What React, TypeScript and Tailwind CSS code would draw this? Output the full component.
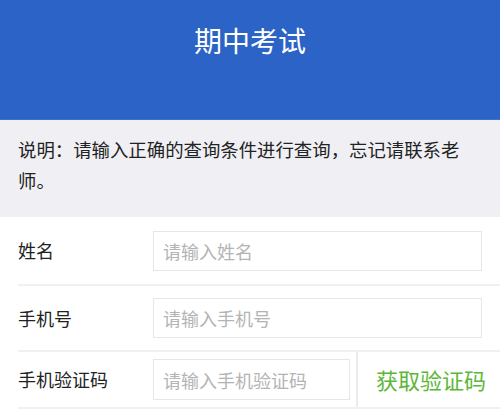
import { FC } from 'react';

const font = "font-['Noto_Sans_CJK_SC','Noto_Sans',sans-serif]";

interface FieldProps {
  label: string;
  placeholder: string;
  rowClass: string;
}

const Field: FC<FieldProps> = ({ label, placeholder, rowClass }) => {
  return (
    <div className="pl-[18px]">
      <div className={`flex items-center ${rowClass}`}>
        <label className="w-[135px] shrink-0 text-[18px] text-[#222]">{label}</label>
        <input
          className="h-[40px] w-[329px] border border-[#e6e6e6] bg-white px-[9px] text-[18px] text-[#222] outline-none placeholder:text-[#b4b4b4]"
          placeholder={placeholder}
        />
      </div>
      <div className="h-[2px] bg-[#f0f0f0]" />
    </div>
  );
};

export default function App() {
  return (
    <div className={`w-[500px] h-[410px] overflow-hidden bg-white ${font}`}>
      <header className="flex h-[120px] justify-center bg-[#2b63c6] pt-[20px] border-b border-[#3f72cc]">
        <h1 className="text-[28px] leading-[40px] text-white">期中考试</h1>
      </header>
      <div className="h-[97px] bg-[#efeff4] pl-[18px] pr-[40px] pt-[14px]">
        <p className="text-[18.4px] leading-[31px] text-[#222]">
          说明：请输入正确的查询条件进行查询，忘记请联系老师。
        </p>
      </div>
      <Field label="姓名" placeholder="请输入姓名" rowClass="h-[67px] pt-[0px]" />
      <Field label="手机号" placeholder="请输入手机号" rowClass="h-[64px]" />
      <div className="pl-[18px]">
        <div className="flex h-[55px] items-center">
          <label className="w-[135px] shrink-0 text-[18px] text-[#222]">手机验证码</label>
          <input
            className="h-[41px] w-[197px] border border-[#e6e6e6] bg-white px-[9px] text-[18px] outline-none placeholder:text-[#b4b4b4]"
            placeholder="请输入手机验证码"
          />
          <div className="ml-[6px] h-full w-[2px] bg-[#ececec]" />
          <button className="flex-1 pl-[4px] text-center text-[22px] text-[#5db739]">获取验证码</button>
        </div>
        <div className="h-[2px] bg-[#f0f0f0]" />
      </div>
    </div>
  );
}
